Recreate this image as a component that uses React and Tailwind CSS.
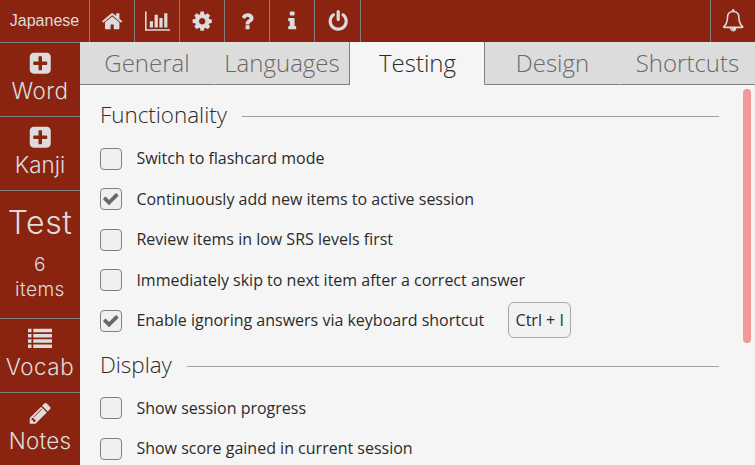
import React from "react";

const ICONS = {
  home: "M1472 992v480q0 26-19 45t-45 19h-384v-384h-256v384h-384q-26 0-45-19t-19-45v-480q0-1 .5-3t.5-3l575-474 575 474q1 2 1 6zm223-69l-62 74q-8 9-21 11h-3q-13 0-21-7l-692-577-692 577q-12 8-24 7-13-2-21-11l-62-74q-8-10-7-23.5t11-21.5l719-599q32-26 76-26t76 26l244 204v-195q0-14 9-23t23-9h192q14 0 23 9t9 23v408l219 182q10 8 11 21.5t-7 23.5z",
  chart: "M640 896v512h-256v-512h256zm384-512v1024h-256v-1024h256zm1024 1152v128h-2048v-1536h128v1408h1920zm-640-896v768h-256v-768h256zm384-384v1152h-256v-1152h256z",
  cog: "M1152 896q0-106-75-181t-181-75-181 75-75 181 75 181 181 75 181-75 75-181zm512-109v222q0 12-8 23t-20 13l-185 28q-19 54-39 91 35 50 107 138 10 12 10 25t-9 23q-27 37-99 108t-94 71q-12 0-26-9l-138-108q-44 23-91 38-16 136-29 186-7 28-36 28h-222q-14 0-24.5-8.5t-11.5-21.5l-28-184q-49-16-90-37l-141 107q-10 9-25 9-14 0-25-11-126-114-165-168-7-10-7-23 0-12 8-23 15-21 51-66.5t54-70.5q-27-50-41-99l-183-27q-13-2-21-12.5t-8-23.5v-222q0-12 8-23t19-13l186-28q14-46 39-92-40-57-107-138-10-12-10-24 0-10 9-23 26-36 98.5-107.5t94.5-71.5q13 0 26 10l138 107q44-23 91-38 16-136 29-186 7-28 36-28h222q14 0 24.5 8.5t11.5 21.5l28 184q49 16 90 37l142-107q9-9 24-9 13 0 25 10 129 119 165 170 7 8 7 22 0 12-8 23-15 21-51 66.5t-54 70.5q26 50 41 98l183 28q13 2 21 12.5t8 23.5z",
  question: "M1088 1256v240q0 16-12 28t-28 12h-240q-16 0-28-12t-12-28v-240q0-16 12-28t28-12h240q16 0 28 12t12 28zm316-600q0 54-15.5 101t-35 76.5-55 59.5-57.5 43.5-61 35.5q-41 23-68.5 65t-27.5 67q0 17-12 32.5t-28 15.5h-240q-15 0-25.5-18.5t-10.5-37.5v-45q0-83 65-156.5t143-108.5q59-27 84-56t25-76q0-42-46.5-74t-107.5-32q-65 0-108 29-35 25-107 115-13 16-31 16-12 0-25-8l-164-125q-13-10-15.5-25t5.5-28q160-266 464-266 80 0 161 31t146 83 106 127.5 41 158.5z",
  info: "M1216 1344v128q0 26-19 45t-45 19h-512q-26 0-45-19t-19-45v-128q0-26 19-45t45-19h64v-384h-64q-26 0-45-19t-19-45v-128q0-26 19-45t45-19h384q26 0 45 19t19 45v576h64q26 0 45 19t19 45zm-128-1152v192q0 26-19 45t-45 19h-256q-26 0-45-19t-19-45v-192q0-26 19-45t45-19h256q26 0 45 19t19 45z",
  power: "M1664 896q0 156-61 298t-164 245-245 164-298 61-298-61-245-164-164-245-61-298q0-182 80.5-343t226.5-270q43-32 95.5-25t83.5 50q32 42 24.5 94.5t-49.5 84.5q-98 74-151.5 181t-53.5 228q0 104 40.5 198.5t109.5 163.5 163.5 109.5 198.5 40.5 198.5-40.5 163.5-109.5 109.5-163.5 40.5-198.5q0-121-53.5-228t-151.5-181q-42-32-49.5-84.5t24.5-94.5q31-43 84-50t95 25q146 109 226.5 270t80.5 343zm-640-768v640q0 52-38 90t-90 38-90-38-38-90v-640q0-52 38-90t90-38 90 38 38 90z",
  bell: "M912 1696q0-16-16-16-59 0-101.5-42.5t-42.5-101.5q0-16-16-16t-16 16q0 73 51.5 124.5t124.5 51.5q16 0 16-16zm-666-288h1300q-266-300-266-832 0-51-24-105t-69-103-121.5-80.5-169.5-31.5-169.5 31.5-121.5 80.5-69 103-24 105q0 532-266 832zm1482 0q0 52-38 90t-90 38h-448q0 106-75 181t-181 75-181-75-75-181h-448q-52 0-90-38t-38-90q50-42 91-88t85-119.5 74.5-158.5 50-206 19.5-260q0-152 117-282.5t307-158.5q-8-19-8-39 0-40 28-68t68-28 68 28 28 68q0 20-8 39 190 28 307 158.5t117 282.5q0 139 19.5 260t50 206 74.5 158.5 85 119.5 91 88z",
  plus: "M1408 960v-128q0-26-19-45t-45-19h-320v-320q0-26-19-45t-45-19h-128q-26 0-45 19t-19 45v320h-320q-26 0-45 19t-19 45v128q0 26 19 45t45 19h320v320q0 26 19 45t45 19h128q26 0 45-19t19-45v-320h320q26 0 45-19t19-45zm256-544v960q0 119-84.5 203.5t-203.5 84.5h-960q-119 0-203.5-84.5t-84.5-203.5v-960q0-119 84.5-203.5t203.5-84.5h960q119 0 203.5 84.5t84.5 203.5z",
  list: "M0 1280h256v256h-256zM0 896h256v256h-256zM0 512h256v256h-256zM0 128h256v256h-256zM384 1280h1408v256h-1408zM384 896h1408v256h-1408zM384 512h1408v256h-1408zM384 128h1408v256h-1408z",
  pencil: "M491 1536l91-91-235-235-91 91v107h128v128h107zm523-928q0-22-22-22-10 0-17 7l-542 542q-7 7-7 17 0 22 22 22 10 0 17-7l542-542q7-7 7-17zm-54-192l416 416-832 832h-416v-416zm683 96q0 53-37 90l-166 166-416-416 166-165q36-38 90-38 53 0 91 38l235 234q37 39 37 91z",
  check: "M1671 566q0 40-28 68l-724 724-136 136q-28 28-68 28t-68-28l-136-136-362-362q-28-28-28-68t28-68l136-136q28-28 68-28t68 28l294 295 656-657q28-28 68-28t68 28l136 136q28 28 28 68z",
};

function Icon({ name, className }) {
  return (
    <svg viewBox={name === "chart" ? "0 0 2048 1792" : "0 0 1792 1792"} className={"shrink-0 fill-current " + className}>
      <path d={ICONS[name]} />
    </svg>
  );
}

function TopButton({ name, className = "w-[45px]", iconClass = "size-[22.4px]" }) {
  return (
    <button className={"flex h-full items-center justify-center border-r border-[#808080] " + className}>
      <Icon name={name} className={iconClass} />
    </button>
  );
}

function SideButton({ name, label, className }) {
  return (
    <button className="flex h-[74px] w-full shrink-0 flex-col items-center border-t border-[#808080] pt-2">
      <Icon name={name} className="size-[24.5px]" />
      <span className={"mt-[0.5px] text-[22.4px] leading-[30px] " + className}>{label}</span>
    </button>
  );
}

function Tab({ label, className }) {
  return (
    <div className={"flex h-[43px] w-[135px] shrink-0 justify-center border-b text-[24px] leading-[42px] font-light " + className}>
      {label}
    </div>
  );
}

function Heading({ children, className = "" }) {
  return (
    <div className={"flex h-[34px] items-center " + className}>
      <h2 className="text-[22.4px] leading-[34px] font-light">{children}</h2>
      <div className="mt-[3px] ml-[15px] h-px flex-1 bg-[#a0a0a0]" />
    </div>
  );
}

function Option({ label, checked, shortcut, className = "", labelClass = "" }) {
  return (
    <div className={"flex h-[22px] items-center " + className}>
      <span className="flex size-[22px] items-center justify-center rounded-[4px] border border-[#808080] bg-[#f0f0f0] text-[#696969]">
        {checked && <Icon name="check" className="mb-px size-[17.6px]" />}
      </span>
      <span className={"ml-[14.4px] text-[16px] leading-[22px] " + labelClass}>{label}</span>
      {shortcut && (
        <kbd className="mb-0.5 ml-[23.6px] flex h-9 w-[63px] items-center justify-center rounded-[6px] border border-[#a9a9a9] bg-[#f2f2f2] pl-px font-['Open_Sans',sans-serif] text-[16px] whitespace-nowrap">
          {shortcut}
        </kbd>
      )}
    </div>
  );
}

export default function App() {
  return (
    <div className="flex h-[465px] w-[755px] flex-col overflow-hidden bg-[#8b2311] font-['Open_Sans',sans-serif] text-[#dcdcdc]">
      <header className="flex h-[42px] shrink-0">
        <div className="flex w-[90px] items-center justify-center border-r border-[#808080] font-['Liberation_Sans',Arial,sans-serif] text-[16px]">
          Japanese
        </div>
        <TopButton name="home" />
        <TopButton name="chart" className="w-[45px] pl-px" iconClass="h-[22.4px] w-[25.6px]" />
        <TopButton name="cog" />
        <TopButton name="question" />
        <TopButton name="info" />
        <TopButton name="power" className="w-[46px] pl-px" />
        <div className="ml-auto flex w-[45px] items-center justify-center border-l border-[#808080] pb-px">
          <Icon name="bell" className="size-[22.4px]" />
        </div>
      </header>
      <div className="flex min-h-0 flex-1">
        <nav className="flex w-20 shrink-0 flex-col font-['Inter',sans-serif] font-[350]">
          <SideButton name="plus" label="Word" className="tracking-[0.5px]" />
          <SideButton name="plus" label="Kanji" />
          <button className="flex h-[128px] shrink-0 flex-col items-center border-t border-[#808080] pt-[11px]">
            <span className="text-[32px] leading-[42px] tracking-[0.5px]">Test</span>
            <span className="mt-[8px] text-[19.2px] leading-[25px] tracking-[0.4px]">6<br />items</span>
          </button>
          <SideButton name="list" label="Vocab" className="tracking-[0.6px]" />
          <SideButton name="pencil" label="Notes" className="tracking-[0.2px]" />
        </nav>
        <main className="flex w-[675px] flex-col bg-[#f5f5f5] text-[#2b2b2b]">
          <div className="flex shrink-0">
            <Tab label="General" className="border-r border-r-[#dcdcdc] border-b-[#808080] bg-[#dcdcdc] text-[#696969]" />
            <Tab label="Languages" className="border-r border-[#808080] bg-[#dcdcdc] text-[#696969]" />
            <Tab label="Testing" className="border-r border-r-[#808080] border-b-[#f5f5f5] bg-[#f5f5f5] pl-px" />
            <Tab label="Design" className="border-r border-r-[#dcdcdc] border-b-[#808080] bg-[#dcdcdc] pl-px text-[#696969]" />
            <Tab label="Shortcuts" className="border-[#808080] bg-[#dcdcdc] text-[#696969]" />
          </div>
          <div className="flex min-h-0 flex-1 justify-between">
            <section className="ml-5 w-[619px] pt-[13px]">
              <Heading>Functionality</Heading>
              <Option label="Switch to flashcard mode" className="mt-4" labelClass="mb-0.5" />
              <Option label="Continuously add new items to active session" checked className="mt-[18px]" />
              <Option label="Review items in low SRS levels first" className="mt-[19px]" labelClass="mb-0.5" />
              <Option label="Immediately skip to next item after a correct answer" className="mt-[18px]" />
              <Option label="Enable ignoring answers via keyboard shortcut" checked shortcut="Ctrl + I" className="mt-[19px]" labelClass="mb-0.5" />
              <Heading className="mt-4">Display</Heading>
              <Option label="Show session progress" className="mt-[15px]" />
              <Option label="Show score gained in current session" className="mt-[19px]" labelClass="mb-0.5" />
            </section>
            <div className="mt-1 mr-1 h-[254px] w-2 rounded-full bg-[#f49797]" />
          </div>
        </main>
      </div>
    </div>
  );
}
